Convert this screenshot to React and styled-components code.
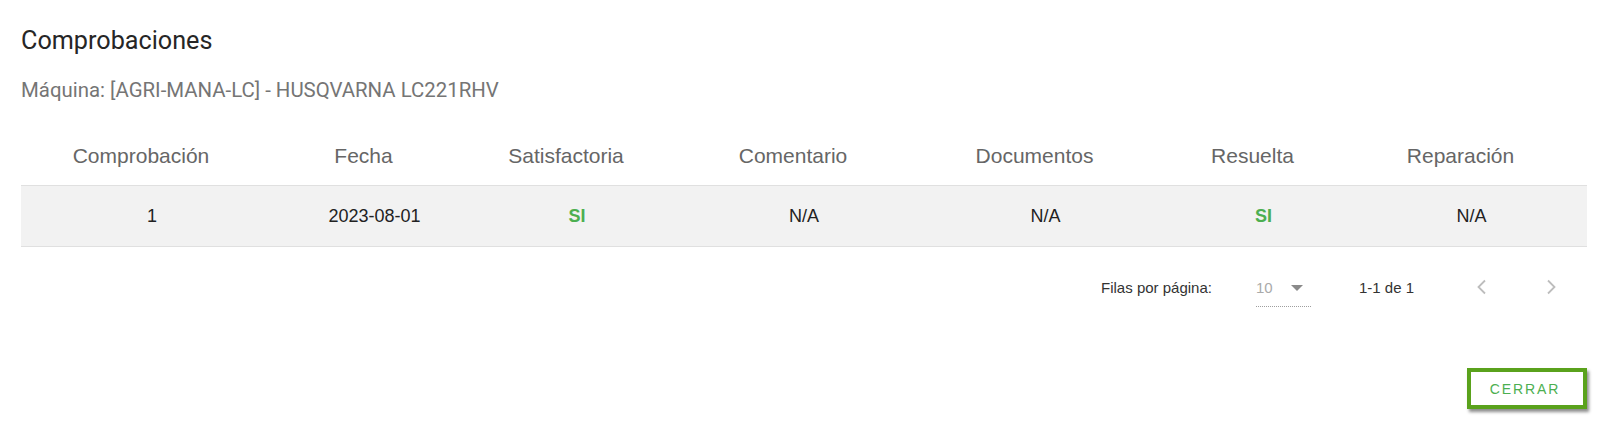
import React from 'react';
import styled, { createGlobalStyle } from 'styled-components';

const GlobalStyle = createGlobalStyle`
  body {
    margin: 0;
    background: #ffffff;
    font-family: "Liberation Sans", Arial, sans-serif;
  }
`;

const Page = styled.div`
  padding: 26px 28px 13px 21px;
`;

const Title = styled.h2`
  margin: 0;
  font-family: Roboto, "Liberation Sans", sans-serif;
  font-weight: 400;
  font-size: 25.2px;
  line-height: 30px;
  color: #262626;
`;

const Subtitle = styled.p`
  margin: 22px 0 0;
  font-family: Roboto, "Liberation Sans", sans-serif;
  font-size: 20.4px;
  line-height: 24px;
  color: #757575;
`;

const Table = styled.table`
  margin-top: 24px;
  width: 100%;
  border-collapse: collapse;
  table-layout: fixed;
`;

const HeadCell = styled.th`
  height: 59px;
  padding: 0 22px 0 0;
  font-weight: 400;
  font-size: 21px;
  color: #666666;
  text-align: center;
  border-bottom: 1px solid #e0e0e0;
`;

const Row = styled.tr`
  background: #f2f2f2;
  border-bottom: 1px solid #e0e0e0;
`;

const Cell = styled.td`
  height: 60px;
  padding: 0;
  font-size: 18px;
  color: ${p => (p.$ok ? '#4caf50' : '#222222')};
  font-weight: ${p => (p.$ok ? 700 : 400)};
  text-align: center;
`;

const Toolbar = styled.div`
  margin-top: 16px;
  height: 48px;
  display: flex;
  align-items: center;
  justify-content: flex-end;
  padding-right: 16px;
  font-size: 15px;
  color: #333333;
`;

const Select = styled.div`
  margin-left: 44px;
  width: 55px;
  height: 30px;
  display: flex;
  align-items: center;
  justify-content: space-between;
  border-bottom: 1px dotted #9e9e9e;
  box-sizing: border-box;
  color: #aaaaaa;
  margin-top: 10px;
  padding-bottom: 8px;
  padding-right: 8px;
`;

const Caret = styled.span`
  width: 0;
  height: 0;
  border-left: 6px solid transparent;
  border-right: 6px solid transparent;
  border-top: 6px solid #8a8a8a;
`;

const Range = styled.span`
  margin-left: 48px;
`;

const NavButton = styled.button`
  width: 40px;
  height: 40px;
  margin-left: ${p => p.$gap}px;
  padding: 0;
  border: none;
  background: none;
  display: flex;
  align-items: center;
  justify-content: center;
`;

const Actions = styled.div`
  margin-top: 57px;
  display: flex;
  justify-content: flex-end;
`;

const CloseButton = styled.button`
  width: 120px;
  height: 41px;
  box-sizing: border-box;
  border: 4px solid #5aa21c;
  background: #ffffff;
  box-shadow: 2px 3px 3px rgba(0, 0, 0, 0.45);
  font-family: "Liberation Sans", Arial, sans-serif;
  font-size: 14px;
  letter-spacing: 1.9px;
  color: #4caf50;
  padding: 0 4px 0 0;
`;

const Chevron = ({ dir }) => (
  <svg width="12" height="16" viewBox="0 0 12 16">
    <polyline
      points={dir === 'left' ? '9,1.5 2.5,8 9,14.5' : '3,1.5 9.5,8 3,14.5'}
      fill="none"
      stroke="#bdbdbd"
      strokeWidth="1.8"
    />
  </svg>
);

const columns = [
  { title: 'Comprobación', width: 262 },
  { title: 'Fecha', width: 183 },
  { title: 'Satisfactoria', width: 222 },
  { title: 'Comentario', width: 232 },
  { title: 'Documentos', width: 251 },
  { title: 'Resuelta', width: 185 },
  { title: 'Reparación', width: 231 },
];

const rows = [['1', '2023-08-01', 'SI', 'N/A', 'N/A', 'SI', 'N/A']];

export default function App() {
  return (
    <Page>
      <GlobalStyle />
      <Title>Comprobaciones</Title>
      <Subtitle>Máquina: [AGRI-MANA-LC] - HUSQVARNA LC221RHV</Subtitle>
      <Table>
        <colgroup>
          {columns.map(c => (
            <col key={c.title} style={{ width: c.width }} />
          ))}
        </colgroup>
        <thead>
          <tr>
            {columns.map(c => (
              <HeadCell key={c.title}>{c.title}</HeadCell>
            ))}
          </tr>
        </thead>
        <tbody>
          {rows.map((r, i) => (
            <Row key={i}>
              {r.map((v, j) => (
                <Cell key={j} $ok={v === 'SI'}>{v}</Cell>
              ))}
            </Row>
          ))}
        </tbody>
      </Table>
      <Toolbar>
        <span>Filas por página:</span>
        <Select>
          <span>10</span>
          <Caret />
        </Select>
        <Range>1-1 de 1</Range>
        <NavButton $gap={48}><Chevron dir="left" /></NavButton>
        <NavButton $gap={29}><Chevron dir="right" /></NavButton>
      </Toolbar>
      <Actions>
        <CloseButton>CERRAR</CloseButton>
      </Actions>
    </Page>
  );
}
